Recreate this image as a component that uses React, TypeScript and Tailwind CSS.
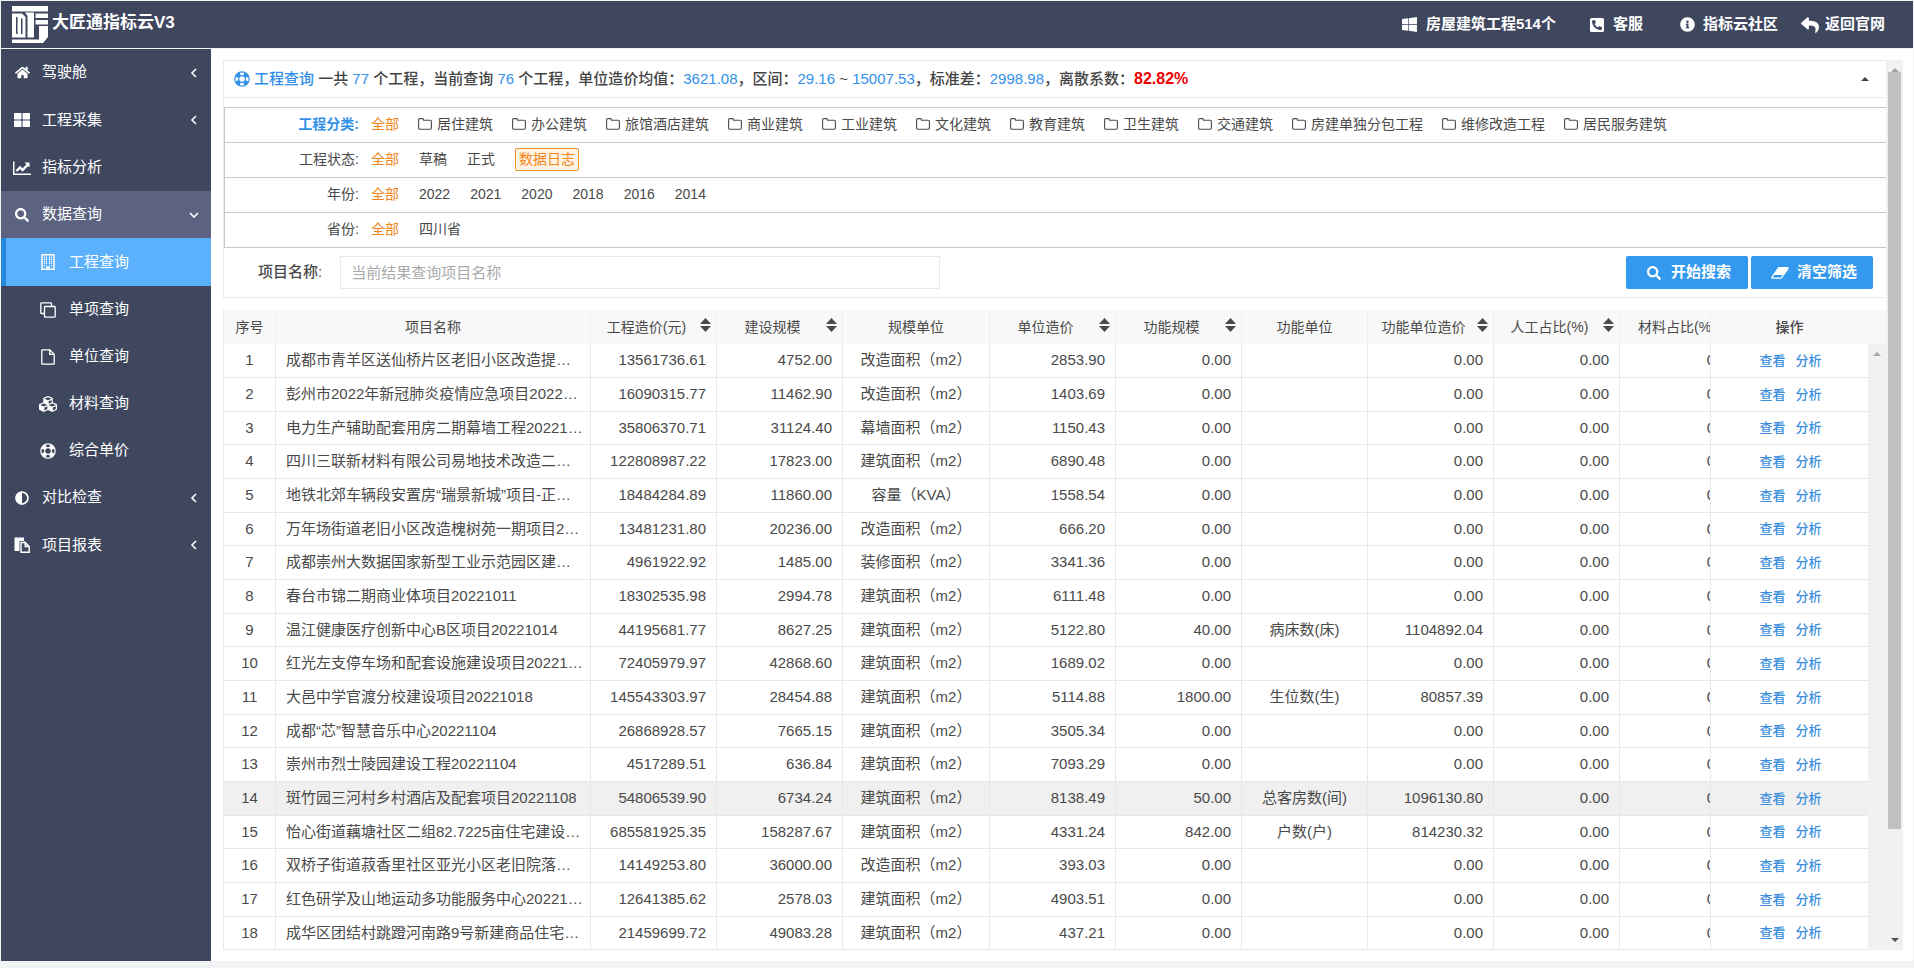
import type { ReactNode } from 'react'
import clsx from 'clsx'
import {
  FaAdjust,
  FaCubes,
  FaHome,
  FaInfoCircle,
  FaPhoneSquareAlt,
  FaReply,
  FaSearch,
  FaThLarge,
  FaWindows,
} from 'react-icons/fa'

type MenuItem = {
  label: string
  icon: ReactNode
  arrow?: 'left' | 'down'
  sub?: boolean
  open?: boolean
  active?: boolean
  tall?: boolean
}

function LogoIcon() {
  return (
    <svg width="36" height="37" viewBox="0 0 36 37" aria-hidden="true">
      <g fill="#fff">
        <path d="M0 0h36v5.500H0z" />
        <path fillRule="evenodd" d="M0 7.500h10l3.500 3.500v20.500H0zM4 11v17h1.500V11zM9 12v16h1.500V13z" />
        <path d="M13 6.500h9v25h-6.500V10z" />
        <path d="M23.500 7.500H36v4.500H23.500zM23.500 14H36v4.500H23.500z" />
        <path d="M27 20h9v11l-5 6H0v-3.500h27z" />
      </g>
    </svg>
  )
}

function BuildingIcon() {
  return (
    <svg width="14" height="16" viewBox="0 0 14 16" fill="none" stroke="currentColor">
      <rect x="1" y="0.75" width="12" height="14.5" strokeWidth="1.5" />
      <path d="M3.500 2.500v10M5.500 2.500v9M8.500 2.500v9M10.500 2.500v10" strokeWidth="1.2" strokeDasharray="1.3 0.8" />
      <path d="M5 13.5h4" strokeWidth="2" />
    </svg>
  )
}

function ChartIcon() {
  return (
    <svg width="18" height="14" viewBox="0 0 18 14" fill="none" stroke="currentColor">
      <path d="M0.750 0.500v12.750H18" strokeWidth="1.500" />
      <path d="M3.500 10l3.500-3.500L9.500 9l5-5" strokeWidth="2.400" />
      <path d="M11.500 1.500h5v5z" fill="currentColor" stroke="none" />
    </svg>
  )
}

function LifeRingIcon() {
  return (
    <svg width="16" height="16" viewBox="0 0 16 16" fill="none" stroke="currentColor">
      <circle cx="8" cy="8" r="7.2" strokeWidth="1.2" />
      <circle cx="8" cy="8" r="3.4" strokeWidth="1.2" />
      <circle
        cx="8"
        cy="8"
        r="5.3"
        strokeWidth="3.6"
        pathLength="80"
        strokeDasharray="11 9"
        strokeDashoffset="-4.5"
      />
    </svg>
  )
}

function CloneIcon() {
  return (
    <svg width="16" height="16" viewBox="0 0 16 16" fill="none" stroke="currentColor" strokeWidth="1.300">
      <rect x="4.500" y="4.500" width="10.700" height="10.700" rx="0.800" />
      <path d="M4.500 11.500H1.500a.7.7 0 0 1-.7-.7V1.500a.7.7 0 0 1 .7-.7h9.300a.7.7 0 0 1 .7.7v3" />
    </svg>
  )
}

function FileIcon() {
  return (
    <svg width="14" height="16" viewBox="0 0 14 16" fill="none" stroke="currentColor" strokeWidth="1.300">
      <path d="M8.700 0.800H1.300a.5.5 0 0 0-.5.5v13.400a.5.5 0 0 0 .5.500h11.400a.5.5 0 0 0 .5-.5V5.300L8.700 0.800v4.500h4.500" />
    </svg>
  )
}

function PasteIcon() {
  return (
    <svg width="16" height="16" viewBox="0 0 16 16" fill="currentColor">
      <path d="M0.500 0.500h9.500v3.500H5.500V14h-5z" />
      <path
        d="M11 5.500H7v9.700h8.200V9.500L11.200 5.500v4h4"
        fill="none"
        stroke="currentColor"
        strokeWidth="1.400"
      />
    </svg>
  )
}

function FolderIcon() {
  return (
    <svg width="14" height="12" viewBox="0 0 14 12" fill="none" stroke="currentColor" strokeWidth="1.100">
      <path d="M0.600 10V1.800A1.200 1.200 0 0 1 1.800.600h2.600a1.200 1.200 0 0 1 1.200 1.200v.4h6.600a1.200 1.200 0 0 1 1.200 1.200V10a1.200 1.200 0 0 1-1.200 1.200H1.800A1.200 1.200 0 0 1 .600 10z" />
    </svg>
  )
}

function EraserIcon() {
  return (
    <svg width="18" height="12" viewBox="0 0 18 12" fill="none" stroke="currentColor">
      <path d="M7.700 0.700h8.800a.6.6 0 0 1 .5 1l-6.500 9a1.200 1.200 0 0 1-.9.500H1.500a.6.6 0 0 1-.5-1z" strokeWidth="1.300" />
      <path d="M7.700.700h8.800l.4 1L12.500 8H2.700z" fill="currentColor" stroke="none" />
    </svg>
  )
}

function AngleIcon({ down }: { down?: boolean }) {
  return (
    <svg width="10" height="10" viewBox="0 0 10 10" fill="none" stroke="currentColor" strokeWidth="1.600">
      <path d={down ? 'M1 3l4 4 4-4' : 'M7 1L3 5l4 4'} />
    </svg>
  )
}

function Triangle({ down, size = 'md' }: { down?: boolean; size?: 'sm' | 'md' }) {
  return (
    <svg
      width={size === 'sm' ? 8 : 11}
      height={size === 'sm' ? 4 : 6}
      viewBox="0 0 10 5"
      preserveAspectRatio="none"
      fill="currentColor"
      aria-hidden="true"
    >
      <path d={down ? 'M0 0h10L5 5z' : 'M0 5h10L5 0z'} />
    </svg>
  )
}

const menu: MenuItem[] = [
  { label: '驾驶舱', icon: <FaHome size={15} />, arrow: 'left' },
  { label: '工程采集', icon: <FaThLarge size={16} />, arrow: 'left', tall: true },
  { label: '指标分析', icon: <ChartIcon /> },
  { label: '数据查询', icon: <FaSearch size={14} />, arrow: 'down', open: true },
  { label: '工程查询', icon: <BuildingIcon />, sub: true, active: true, tall: true },
  { label: '单项查询', icon: <CloneIcon />, sub: true },
  { label: '单位查询', icon: <FileIcon />, sub: true },
  { label: '材料查询', icon: <FaCubes size={18} />, sub: true },
  { label: '综合单价', icon: <LifeRingIcon />, sub: true },
  { label: '对比检查', icon: <FaAdjust size={14} />, arrow: 'left' },
  { label: '项目报表', icon: <PasteIcon />, arrow: 'left', tall: true },
]

const categories = [
  '居住建筑',
  '办公建筑',
  '旅馆酒店建筑',
  '商业建筑',
  '工业建筑',
  '文化建筑',
  '教育建筑',
  '卫生建筑',
  '交通建筑',
  '房建单独分包工程',
  '维修改造工程',
  '居民服务建筑',
]

const years = ['2022', '2021', '2020', '2018', '2016', '2014']

// name, cost, scale, scale unit, unit price, function scale, function unit, function unit price
const rows = [
  ['成都市青羊区送仙桥片区老旧小区改造提…', '13561736.61', '4752.00', '改造面积（m2）', '2853.90', '0.00', '', '0.00'],
  ['彭州市2022年新冠肺炎疫情应急项目2022…', '16090315.77', '11462.90', '改造面积（m2）', '1403.69', '0.00', '', '0.00'],
  ['电力生产辅助配套用房二期幕墙工程20221…', '35806370.71', '31124.40', '幕墙面积（m2）', '1150.43', '0.00', '', '0.00'],
  ['四川三联新材料有限公司易地技术改造二…', '122808987.22', '17823.00', '建筑面积（m2）', '6890.48', '0.00', '', '0.00'],
  ['地铁北郊车辆段安置房“瑞景新城”项目-正…', '18484284.89', '11860.00', '容量（KVA）', '1558.54', '0.00', '', '0.00'],
  ['万年场街道老旧小区改造槐树苑一期项目2…', '13481231.80', '20236.00', '改造面积（m2）', '666.20', '0.00', '', '0.00'],
  ['成都崇州大数据国家新型工业示范园区建…', '4961922.92', '1485.00', '装修面积（m2）', '3341.36', '0.00', '', '0.00'],
  ['春台市锦二期商业体项目20221011', '18302535.98', '2994.78', '建筑面积（m2）', '6111.48', '0.00', '', '0.00'],
  ['温江健康医疗创新中心B区项目20221014', '44195681.77', '8627.25', '建筑面积（m2）', '5122.80', '40.00', '病床数(床)', '1104892.04'],
  ['红光左支停车场和配套设施建设项目20221…', '72405979.97', '42868.60', '建筑面积（m2）', '1689.02', '0.00', '', '0.00'],
  ['大邑中学官渡分校建设项目20221018', '145543303.97', '28454.88', '建筑面积（m2）', '5114.88', '1800.00', '生位数(生)', '80857.39'],
  ['成都“芯”智慧音乐中心20221104', '26868928.57', '7665.15', '建筑面积（m2）', '3505.34', '0.00', '', '0.00'],
  ['崇州市烈士陵园建设工程20221104', '4517289.51', '636.84', '建筑面积（m2）', '7093.29', '0.00', '', '0.00'],
  ['斑竹园三河村乡村酒店及配套项目20221108', '54806539.90', '6734.24', '建筑面积（m2）', '8138.49', '50.00', '总客房数(间)', '1096130.80'],
  ['怡心街道藕塘社区二组82.7225亩住宅建设…', '685581925.35', '158287.67', '建筑面积（m2）', '4331.24', '842.00', '户数(户)', '814230.32'],
  ['双桥子街道菽香里社区亚光小区老旧院落…', '14149253.80', '36000.00', '改造面积（m2）', '393.03', '0.00', '', '0.00'],
  ['红色研学及山地运动多功能服务中心20221…', '12641385.62', '2578.03', '建筑面积（m2）', '4903.51', '0.00', '', '0.00'],
  ['成华区团结村跳蹬河南路9号新建商品住宅…', '21459699.72', '49083.28', '建筑面积（m2）', '437.21', '0.00', '', '0.00'],
]

const HOVERED_ROW = 13

const cell = 'border-r border-b border-[#e8e8e8] p-0'
const numCell = 'border-r border-b border-[#e8e8e8] py-0 pr-[10px] pl-0 text-right'

function TopLink({ icon, label, className }: { icon: ReactNode; label: string; className?: string }) {
  return (
    <a href="#" className={clsx('flex items-center', className)}>
      {icon}
      {label}
    </a>
  )
}

function HeadCell({ label, sort }: { label: string; sort?: boolean }) {
  return (
    <th className="border-r border-[#eeeeee] p-0 font-normal">
      {sort ? (
        <div className="flex items-center pl-[2px]">
          <span className="flex-1 text-center whitespace-nowrap">{label}</span>
          <button type="button" aria-label={`${label}排序`} className="mr-[5px] flex flex-col gap-[2px] pb-1">
            <Triangle />
            <Triangle down />
          </button>
        </div>
      ) : (
        label
      )}
    </th>
  )
}

function FilterRow({
  label,
  strong,
  tight,
  children,
}: {
  label: string
  strong?: boolean
  tight?: boolean
  children: ReactNode
}) {
  return (
    <div className="flex h-[35px] items-center border-b border-[#c8c8c8] pb-[2px] text-sm">
      <div className={clsx('w-[134px] text-right', strong && 'font-bold text-[#3391ea]')}>{label}</div>
      <div className={clsx('ml-3 flex items-center', tight ? 'gap-[19px]' : 'gap-5')}>
        <a href="#" className="text-[#f0861a]">
          全部
        </a>
        {children}
      </div>
    </div>
  )
}

function Sidebar() {
  return (
    <nav className="w-[210px] shrink-0 bg-[#3f475f] text-[15px] text-white">
      {menu.map((item) => (
        <a
          key={item.label}
          href="#"
          className={clsx(
            'flex items-center',
            item.tall ? 'h-12' : 'h-[47px]',
            item.open && 'bg-[#5b6380]',
            item.active && 'border-l-[5px] border-[#2489dc] bg-[#5cb1fd]',
            item.sub && !item.active && 'pl-[5px]'
          )}
        >
          <span className={clsx('flex justify-center', item.sub ? 'ml-[30px] w-6' : 'ml-[9px] w-6')}>{item.icon}</span>
          <span className={item.sub ? 'ml-[9px]' : 'ml-2'}>{item.label}</span>
          {item.arrow && (
            <span className="mr-3 ml-auto">
              <AngleIcon down={item.arrow === 'down'} />
            </span>
          )}
        </a>
      ))}
    </nav>
  )
}

function Num({ children }: { children: ReactNode }) {
  return <span className="font-normal text-[#3391ea]">{children}</span>
}

function Filters() {
  return (
    <section className="border-b border-l border-[#e9e9e9]">
      <div className="flex h-[38px] items-center border-t border-b border-[#e9e9e9] pr-[17px] pl-[10px] text-[15px] font-medium text-[#444]">
        <span className="mr-1 text-[#3391ea]">
          <LifeRingIcon />
        </span>
        <p className="flex-1">
          <span className="text-[#3391ea]">工程查询</span> 一共 <Num>77</Num> 个工程，当前查询 <Num>76</Num>{' '}
          个工程，单位造价均值：<Num>3621.08</Num>，区间：<Num>29.16</Num> ~ <Num>15007.53</Num>，标准差：
          <Num>2998.98</Num>，离散系数：
          <b className="text-base font-bold text-[#f00000]">82.82%</b>
        </p>
        <button type="button" aria-label="收起">
          <Triangle size="sm" />
        </button>
      </div>
      <div className="mt-[9px] border-t border-l border-[#c8c8c8]">
        <FilterRow label="工程分类:" strong tight>
          {categories.map((name) => (
            <a key={name} href="#" className="flex items-center gap-[5px] whitespace-nowrap">
              <FolderIcon />
              {name}
            </a>
          ))}
        </FilterRow>
        <FilterRow label="工程状态:">
          <a href="#">草稿</a>
          <a href="#">正式</a>
          <a href="#" className="rounded-xs border border-[#ee8f2c] bg-[#fff3e4] px-[3px] leading-[21px] text-[#f0861a]">
            数据日志
          </a>
        </FilterRow>
        <FilterRow label="年份:">
          {years.map((year) => (
            <a key={year} href="#">
              {year}
            </a>
          ))}
        </FilterRow>
        <FilterRow label="省份:">
          <a href="#">四川省</a>
        </FilterRow>
      </div>
      <form className="flex items-center pt-2 pr-[13px] pb-2 pl-[34px] text-[15px]">
        <label htmlFor="project-name" className="font-medium">
          项目名称:
        </label>
        <input
          id="project-name"
          type="text"
          placeholder="当前结果查询项目名称"
          className="ml-[18px] h-[33px] w-[600px] border border-[#e9e9e9] px-[10px] placeholder:text-[#aaaaaa]"
        />
        <div className="ml-auto flex gap-[3px] font-bold text-white">
          <button type="button" className="flex h-[33px] w-[122px] items-center justify-center gap-[10px] rounded-xs bg-[#3399ee] pl-1">
            <FaSearch size={14} />
            开始搜索
          </button>
          <button type="button" className="flex h-[33px] w-[122px] items-center justify-center gap-2 rounded-xs bg-[#3399ee] pl-1">
            <EraserIcon />
            清空筛选
          </button>
        </div>
      </form>
    </section>
  )
}

function ProjectTable() {
  return (
    <section className="relative mt-3 border-l border-[#e9e9e9] bg-[#f8f8f8]">
      <div className="pr-[18px]">
        <table className="w-full table-fixed border-separate border-spacing-0 bg-white text-[15px]">
          <colgroup>
            <col className="w-[52px]" />
            <col />
            <col className="w-[126px]" />
            <col className="w-[126px]" />
            <col className="w-[147px]" />
            <col className="w-[126px]" />
            <col className="w-[126px]" />
            <col className="w-[126px]" />
            <col className="w-[126px]" />
            <col className="w-[126px]" />
            <col className="w-[91px]" />
            <col className="w-[157px]" />
          </colgroup>
          <thead className="bg-[#f8f8f8] text-sm">
            <tr className="h-[34px]">
              <HeadCell label="序号" />
              <HeadCell label="项目名称" />
              <HeadCell label="工程造价(元)" sort />
              <HeadCell label="建设规模" sort />
              <HeadCell label="规模单位" />
              <HeadCell label="单位造价" sort />
              <HeadCell label="功能规模" sort />
              <HeadCell label="功能单位" />
              <HeadCell label="功能单位造价" sort />
              <HeadCell label="人工占比(%)" sort />
              <th className="overflow-hidden border-r border-[#eeeeee] p-0 font-normal">
                <div className="w-[126px] pr-3 whitespace-nowrap">材料占比(%)</div>
              </th>
              <th className="p-0 font-medium">操作</th>
            </tr>
          </thead>
          <tbody>
            {rows.map(([name, cost, scale, scaleUnit, price, fnScale, fnUnit, fnPrice], i) => (
              <tr key={name} className={clsx('h-[34px] nth-[3n]:h-[33px]', i === HOVERED_ROW && 'bg-[#f0f0f0]')}>
                <td className={clsx(cell, 'text-center')}>{i + 1}</td>
                <td className={clsx(cell, 'overflow-hidden whitespace-nowrap')}>
                  <div className="pl-[10px]">{name}</div>
                </td>
                <td className={numCell}>{cost}</td>
                <td className={numCell}>{scale}</td>
                <td className={clsx(cell, 'text-center')}>{scaleUnit}</td>
                <td className={numCell}>{price}</td>
                <td className={numCell}>{fnScale}</td>
                <td className={clsx(cell, 'text-center')}>{fnUnit}</td>
                <td className={numCell}>{fnPrice}</td>
                <td className={numCell}>0.00</td>
                <td className={clsx(cell, 'overflow-hidden')}>
                  <div className="w-[126px] pr-[10px] text-right">0.00</div>
                </td>
                <td className="border-b border-[#e8e8e8] p-0 text-[13px] font-medium text-[#3b8fdc]">
                  <div className="flex justify-center gap-[10px] pl-[2px]">
                    <a href="#">查看</a>
                    <a href="#">分析</a>
                  </div>
                </td>
              </tr>
            ))}
          </tbody>
        </table>
      </div>
      <div className="absolute top-[34px] right-0 bottom-0 flex w-[18px] justify-center bg-[#f1f1f1] pt-2 text-[#a3a3a3]">
        <Triangle size="sm" />
      </div>
    </section>
  )
}

export default function App() {
  return (
    <div className="min-h-screen bg-[#f2f3f5] pt-px pr-px pl-px font-['Liberation_Sans','Noto_Sans_CJK_SC',sans-serif] text-[#4a4a4a]">
      <header className="flex h-[47px] items-center bg-[#3f475f] pr-7 pl-[11px] font-bold text-white">
        <LogoIcon />
        <h1 className="ml-1 pb-1 text-[17px]">大匠通指标云V3</h1>
        <div className="ml-auto flex items-center text-[15px]">
          <TopLink icon={<FaWindows size={17} />} label="房屋建筑工程514个" className="gap-2" />
          <TopLink icon={<FaPhoneSquareAlt size={16} />} label="客服" className="ml-[33px] gap-2" />
          <TopLink icon={<FaInfoCircle size={15} />} label="指标云社区" className="ml-[37px] gap-2" />
          <TopLink icon={<FaReply size={18} />} label="返回官网" className="ml-[23px] gap-[6px]" />
        </div>
      </header>
      <div className="mt-px flex">
        <Sidebar />
        <main className="flex min-w-0 flex-1 bg-white pt-[11px] pr-[10px] pb-[11px] pl-3">
          <div className="min-w-0 flex-1">
            <Filters />
            <ProjectTable />
          </div>
          <div className="flex w-[17px] flex-col items-center justify-between bg-[#f1f1f1] pt-2 pb-2 text-[#505050]">
            <span className="text-[#a3a3a3]">
              <Triangle size="sm" />
            </span>
            <div className="w-[13px] flex-[750] bg-[#c1c1c1]" />
            <div className="flex-[108]" />
            <Triangle down size="sm" />
          </div>
        </main>
      </div>
    </div>
  )
}
